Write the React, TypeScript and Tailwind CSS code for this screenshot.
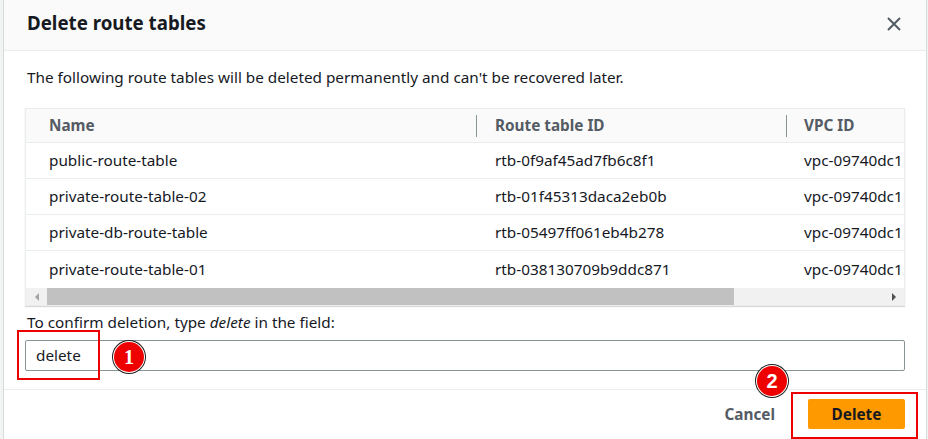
import React from "react";

const rows = [
  ["public-route-table", "rtb-0f9af45ad7fb6c8f1", "vpc-09740dc1"],
  ["private-route-table-02", "rtb-01f45313daca2eb0b", "vpc-09740dc1"],
  ["private-db-route-table", "rtb-05497ff061eb4b278", "vpc-09740dc1"],
  ["private-route-table-01", "rtb-038130709b9ddc871", "vpc-09740dc1"],
];

function Badge({ n, serif, className }: { n: string; serif?: boolean; className: string }) {
  return (
    <div
      className={
        "absolute w-[34px] h-[34px] rounded-full bg-[#1a1a1a] p-[1px] " + className
      }
    >
      <div className="w-full h-full rounded-full bg-white p-[1px]">
        <div
          className={
            "w-full h-full rounded-full bg-[#ee0000] flex items-center justify-center text-white font-bold text-[20px] leading-none " +
            (serif ? "font-['Liberation_Serif',serif]" : "font-['Liberation_Sans',sans-serif]")
          }
        >
          {n}
        </div>
      </div>
    </div>
  );
}

export default function App() {
  return (
    <div className="relative w-[928px] h-[439px] overflow-hidden bg-[#f2f3f3] pl-[3px] font-['Noto_Sans',sans-serif] text-[#16191f]">
      <div className="w-[924px] h-full bg-white border-x border-[#d5dbdb] flex flex-col">
        {/* header */}
        <div className="h-[51px] shrink-0 bg-[#fafafa] border-b border-[#eaeded] flex items-center justify-between pl-[23px] pr-[24px]">
          <h1 className="text-[18.7px] font-bold leading-[22px] -mt-[5px]">Delete route tables</h1>
          <svg width="16" height="16" viewBox="0 0 16 16" className="-mt-[3px]">
            <path d="M2 2 L14 14 M14 2 L2 14" stroke="#545b64" strokeWidth="2" fill="none" />
          </svg>
        </div>
        {/* body */}
        <div className="px-[21px] pt-[16px] pb-[18px] border-b border-[#eaeded]">
          <p className="pl-[2px] text-[15.3px] leading-[20px]">
            The following route tables will be deleted permanently and can't be recovered later.
          </p>
          <div className="mt-[21px] border border-[#eaeded] shadow-[0_1px_1px_rgba(0,0,0,0.15)] overflow-hidden">
            <div className="grid grid-cols-[450px_310px_120px] h-[34px] bg-[#fafafa] border-b border-[#eaeded] text-[15.3px] font-bold text-[#545b64]">
              <div className="flex items-center pl-[23px]">Name</div>
              <div className="flex items-center">
                <span className="w-[1px] h-[22px] bg-[#879596]" />
                <span className="pl-[18px]">Route table ID</span>
              </div>
              <div className="flex items-center">
                <span className="w-[1px] h-[22px] bg-[#879596]" />
                <span className="pl-[17px]">VPC ID</span>
              </div>
            </div>
            {rows.map((r, i) => (
              <div
                key={i}
                className={
                  "grid grid-cols-[450px_310px_120px] text-[15.3px] " +
                  (i < 3 ? "h-[36px] border-b border-[#eaeded]" : "h-[37px]")
                }
              >
                <div className="flex items-center pl-[23px] whitespace-nowrap">{r[0]}</div>
                <div className="flex items-center pl-[19px] whitespace-nowrap">{r[1]}</div>
                <div className="flex items-center pl-[18px] whitespace-nowrap overflow-hidden">{r[2]}</div>
              </div>
            ))}
            {/* scrollbar */}
            <div className="h-[17px] bg-[#f1f1f1] flex items-center">
              <div className="w-[21px] h-full flex items-center justify-center">
                <svg width="6" height="8" viewBox="0 0 6 8">
                  <path d="M5 0 L1 4 L5 8 Z" fill="#a3a3a3" />
                </svg>
              </div>
              <div className="w-[687px] h-full bg-[#c1c1c1]" />
              <div className="flex-1" />
              <div className="w-[21px] h-full flex items-center justify-center">
                <svg width="6" height="8" viewBox="0 0 6 8">
                  <path d="M1 0 L5 4 L1 8 Z" fill="#505050" />
                </svg>
              </div>
            </div>
          </div>
          <div className="mt-[6px] pl-[2px] text-[15.3px] leading-[20px]">
            To confirm deletion, type <i>delete</i> in the field:
          </div>
          <div className="mt-[8px] h-[31px] border border-[#879596] rounded-[2px] flex items-center pl-[10px] text-[15.3px]">
            delete
          </div>
        </div>
        {/* footer */}
        <div className="flex items-center justify-end pt-[9px] pr-[21px] gap-[33px]">
          <span className="text-[15.3px] font-bold text-[#545b64] mt-[1px]">Cancel</span>
          <div className="w-[97px] h-[30px] bg-[#ff9900] rounded-[2px] flex items-center justify-center text-[15.3px] font-bold text-[#16191f]">
            Delete
          </div>
        </div>
      </div>

      {/* annotations */}
      <div className="absolute left-[17px] top-[330px] w-[83px] h-[50px] border-2 border-[#ee0000]" />
      <Badge n="1" serif className="left-[112px] top-[340px]" />
      <div className="absolute left-[791px] top-[392px] w-[127px] h-[47px] border-2 border-[#ee0000]" />
      <Badge n="2" className="left-[755px] top-[364px]" />
    </div>
  );
}
